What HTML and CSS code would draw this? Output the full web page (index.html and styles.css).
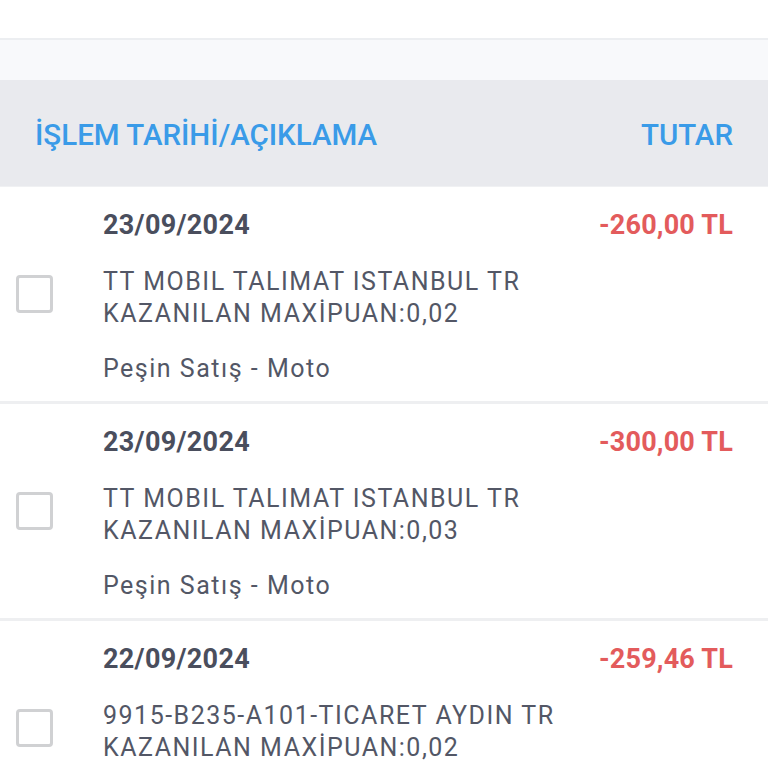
FILE: index.html
```html
<!DOCTYPE html>
<html lang="tr">
<head>
<meta charset="utf-8">
<link rel="stylesheet" href="styles.css">
</head>
<body>
<div class="topbar"></div>
<div class="spacer"></div>
<div class="thead">
  <span class="th">İŞLEM TARİHİ/AÇIKLAMA</span>
  <span class="th">TUTAR</span>
</div>
<div class="list">
  <div class="row">
    <div class="check"><span class="box"></span></div>
    <div class="body">
      <div class="line1"><span class="date">23/09/2024</span><span class="amount">-260,00 TL</span></div>
      <div class="desc">TT MOBIL TALIMAT ISTANBUL TR<br>KAZANILAN MAXİPUAN:0,02</div>
      <div class="sub">Peşin Satış - Moto</div>
    </div>
  </div>
  <div class="row">
    <div class="check"><span class="box"></span></div>
    <div class="body">
      <div class="line1"><span class="date">23/09/2024</span><span class="amount">-300,00 TL</span></div>
      <div class="desc">TT MOBIL TALIMAT ISTANBUL TR<br>KAZANILAN MAXİPUAN:0,03</div>
      <div class="sub">Peşin Satış - Moto</div>
    </div>
  </div>
  <div class="row">
    <div class="check"><span class="box"></span></div>
    <div class="body">
      <div class="line1"><span class="date">22/09/2024</span><span class="amount">-259,46 TL</span></div>
      <div class="desc">9915-B235-A101-TICARET AYDIN TR<br>KAZANILAN MAXİPUAN:0,02</div>
      <div class="sub">Peşin Satış - Moto</div>
    </div>
  </div>
</div>
</body>
</html>
```
FILE: styles.css
```css
html, body {
  margin: 0;
  padding: 0;
  background: #ffffff;
  font-family: Roboto, "Liberation Sans", sans-serif;
  width: 768px;
  height: 768px;
  overflow: hidden;
}
.topbar {
  height: 38px;
  background: #ffffff;
  border-bottom: 2px solid #eceef1;
}
.spacer {
  height: 40px;
  background: #f8f9fb;
}
.thead {
  height: 107px;
  background: #e9eaee;
  display: flex;
  align-items: center;
  justify-content: space-between;
  padding: 4px 35px 0 35px;
  box-sizing: border-box;
  border-bottom: 1px solid #f0f1f3;
}
.th {
  color: #3a9be8;
  font-size: 29.5px;
  font-weight: 500;
  line-height: 34px;
}
.row {
  display: flex;
  align-items: center;
  border-bottom: 3px solid #eeeff1;
}
.check {
  width: 103px;
  flex: none;
  padding-left: 16px;
  box-sizing: border-box;
}
.box {
  display: block;
  width: 31px;
  height: 32px;
  border: 3px solid #d0d1d3;
  border-radius: 4px;
}
.body {
  flex: 1;
  padding: 22px 35px 16px 0;
}
.line1 {
  display: flex;
  justify-content: space-between;
  align-items: baseline;
  line-height: 32px;
}
.date {
  font-size: 27px;
  font-weight: 700;
  color: #4a4e5d;
  letter-spacing: 0.3px;
}
.amount {
  font-size: 27px;
  font-weight: 700;
  color: #e35b5c;
  letter-spacing: 0.2px;
}
.desc {
  margin-top: 25px;
  font-size: 25px;
  line-height: 32px;
  letter-spacing: 1.5px;
  color: #535766;
}
.sub {
  margin-top: 23px;
  font-size: 25px;
  line-height: 32px;
  letter-spacing: 1.5px;
  color: #535766;
}
```
